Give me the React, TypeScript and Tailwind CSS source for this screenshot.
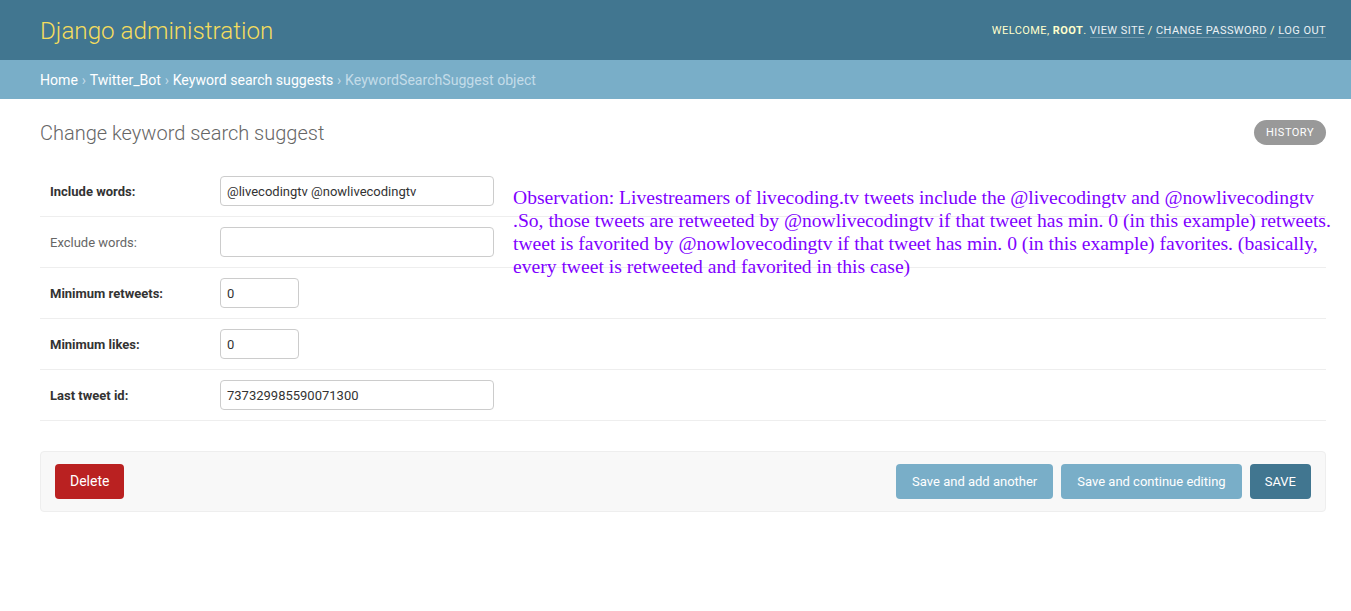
import React from "react";

function Row({ label, required, value, short }: { label: string; required?: boolean; value: string; short?: boolean }) {
  return (
    <div className="flex items-center px-[10px] py-[10px] border-b border-[#eee]">
      <label className={`w-[170px] text-[13px] pt-[1px] ${required ? "font-bold text-[#333]" : "text-[#666]"}`}>{label}</label>
      <input
        readOnly
        value={value}
        className={`${short ? "w-[79px]" : "w-[274px]"} h-[30px] border border-[#ccc] rounded-[4px] px-[6px] text-[13px] text-[#333] bg-white outline-none`}
      />
    </div>
  );
}

export default function App() {
  return (
    <div className="min-h-[611px] bg-white text-[#333]" style={{ fontFamily: "Roboto, 'Lucida Grande', Verdana, Arial, sans-serif" }}>
      <div className="h-[60px] bg-[#417690] flex items-center justify-between pl-10 pr-[25px]">
        <div className="text-[24.2px] font-light text-[#f5dd5d] mt-[2px]">Django administration</div>
        <div className="text-[11px] uppercase tracking-[0.44px] text-[#ffc] mt-[2px]">
          Welcome, <strong className="font-bold">root</strong>.{" "}
          <a className="text-white/90 border-b border-white/25">View site</a> /{" "}
          <a className="text-white/90 border-b border-white/25">Change password</a> /{" "}
          <a className="text-white/90 border-b border-white/25">Log out</a>
        </div>
      </div>
      <div className="h-[39px] bg-[#79aec8] flex items-center px-10 pt-[2px] text-[14.1px] text-[#c4dce8]">
        <a className="text-white">Home</a>
        <span className="mx-[3.75px]">›</span>
        <a className="text-white">Twitter_Bot</a>
        <span className="mx-[3.75px]">›</span>
        <a className="text-white">Keyword search suggests</a>
        <span className="mx-[3.75px]">›</span>
        <span>KeywordSearchSuggest object</span>
      </div>
      <div className="relative pl-10 pr-[25px] pt-[21px]">
        <div className="flex items-start justify-between">
          <h1 className="text-[20px] font-light text-[#666] leading-[26px]">Change keyword search suggest</h1>
          <a className="h-[25px] px-[12px] pt-[1px] flex items-center rounded-full bg-[#999] text-white text-[11px] uppercase tracking-[0.5px]">History</a>
        </div>
        <div className="mt-[20px]">
          <Row label="Include words:" required value="@livecodingtv @nowlivecodingtv" />
          <Row label="Exclude words:" value="" />
          <Row label="Minimum retweets:" required value="0" short />
          <Row label="Minimum likes:" required value="0" short />
          <Row label="Last tweet id:" required value="737329985590071300" />
        </div>
        <div className="mt-[30px] flex items-center justify-between bg-[#f8f8f8] border border-[#eee] rounded-[4px] px-[14px] py-[12px]">
          <a className="h-[35px] px-[15px] flex items-center bg-[#ba2121] text-white text-[14px] rounded-[4px]">Delete</a>
          <div className="flex gap-[8px]">
            <button className="h-[35px] px-[16px] bg-[#79aec8] text-white text-[13px] rounded-[4px]">Save and add another</button>
            <button className="h-[35px] px-[16px] bg-[#79aec8] text-white text-[13px] rounded-[4px]">Save and continue editing</button>
            <button className="h-[35px] px-[15px] bg-[#417690] text-white text-[13px] rounded-[4px]">SAVE</button>
          </div>
        </div>
        <div
          className="absolute left-[513px] top-[87px] w-[828px] text-[19.6px] leading-[23px] text-[#8000ff]"
          style={{ fontFamily: "'Liberation Serif', 'Times New Roman', serif" }}
        >
          Observation: Livestreamers of livecoding.tv tweets include the @livecodingtv and @nowlivecodingtv .So, those tweets are retweeted by @nowlivecodingtv if that tweet has min. 0 (in this example) retweets. tweet is favorited by @nowlovecodingtv if that tweet has min. 0 (in this example) favorites. (basically, every tweet is retweeted and favorited in this case)
        </div>
      </div>
    </div>
  );
}
